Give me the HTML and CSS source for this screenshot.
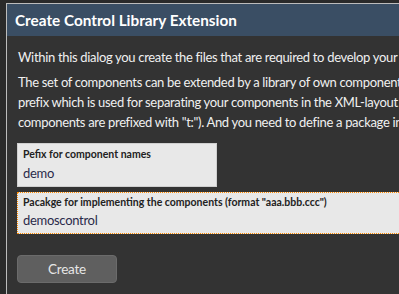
FILE: index.html
```html
<!DOCTYPE html>
<html>
<head>
<meta charset="utf-8">
<link rel="stylesheet" href="styles.css">
</head>
<body>
<div class="dialog">
  <div class="header">Create Control Library Extension</div>
  <div class="content">
    <p class="para first">Within this dialog you create the files that are required to develop your own control library.</p>
    <p class="para">The set of components can be extended by a library of own components. You need to define a<br>prefix which is used for separating your components in the XML-layout (e.g. the standard<br>components are prefixed with "t:"). And you need to define a package in which the classes are created.</p>
    <div class="field">
      <div class="label">Pefix for component names</div>
      <div class="value">demo</div>
    </div>
    <div class="field wide focus">
      <div class="label">Pacakge for implementing the components (format "aaa.bbb.ccc")</div>
      <div class="value">demoscontrol</div>
    </div>
    <button class="btn">Create</button>
  </div>
</div>
</body>
</html>
```
FILE: styles.css
```css
html, body {
  margin: 0;
  padding: 0;
  background: #2a2a2a;
  overflow: hidden;
  width: 399px;
  height: 294px;
}
.dialog {
  margin: 3px 0 0 6px;
  width: 700px;
  height: 400px;
  border-top: 1px solid #bcbcbc;
  border-left: 1px solid #bcbcbc;
  background: #333333;
  font-family: "Lato", sans-serif;
}
.header {
  height: 32px;
  line-height: 32px;
  background: #3a4e64;
  color: #ffffff;
  font-weight: bold;
  font-size: 15.3px;
  padding-left: 8px;
}
.content {
  padding: 0 10px;
}
.para {
  margin: 5px 0 0 0;
  color: #f0f0f0;
  font-size: 13px;
  letter-spacing: -0.32px;
  line-height: 20px;
  white-space: nowrap;
  padding-left: 1px;
}
.para.first {
  margin-top: 11px;
}
.field {
  margin-top: 11px;
  width: 200px;
  height: 44px;
  border: 1px solid #cfcfcf;
  background: #e8e8e8;
  padding: 0 5px;
  box-sizing: border-box;
}
.field.wide {
  width: 600px;
  height: 42px;
  margin-top: 5px;
}
.field.focus {
  border: 1px dotted #ff8c00;
}
.label {
  font-weight: bold;
  font-size: 10.5px;
  color: #222;
  line-height: 14px;
  padding-top: 3px;
}
.value {
  font-size: 13px;
  letter-spacing: -0.3px;
  color: #2b2b4a;
  line-height: 20px;
  margin-top: 2px;
}
.wide .label {
  padding-top: 2px;
}
.wide .value {
  margin-top: 1px;
}
.btn {
  display: block;
  margin-top: 21px;
  width: 100px;
  height: 28px;
  background: #5f5f5f;
  border: 1px solid #6b6b6b;
  border-radius: 4px;
  color: #e6e6e6;
  font-family: "Lato", sans-serif;
  font-size: 13.5px;
  letter-spacing: -0.2px;
  padding: 0;
}
```
